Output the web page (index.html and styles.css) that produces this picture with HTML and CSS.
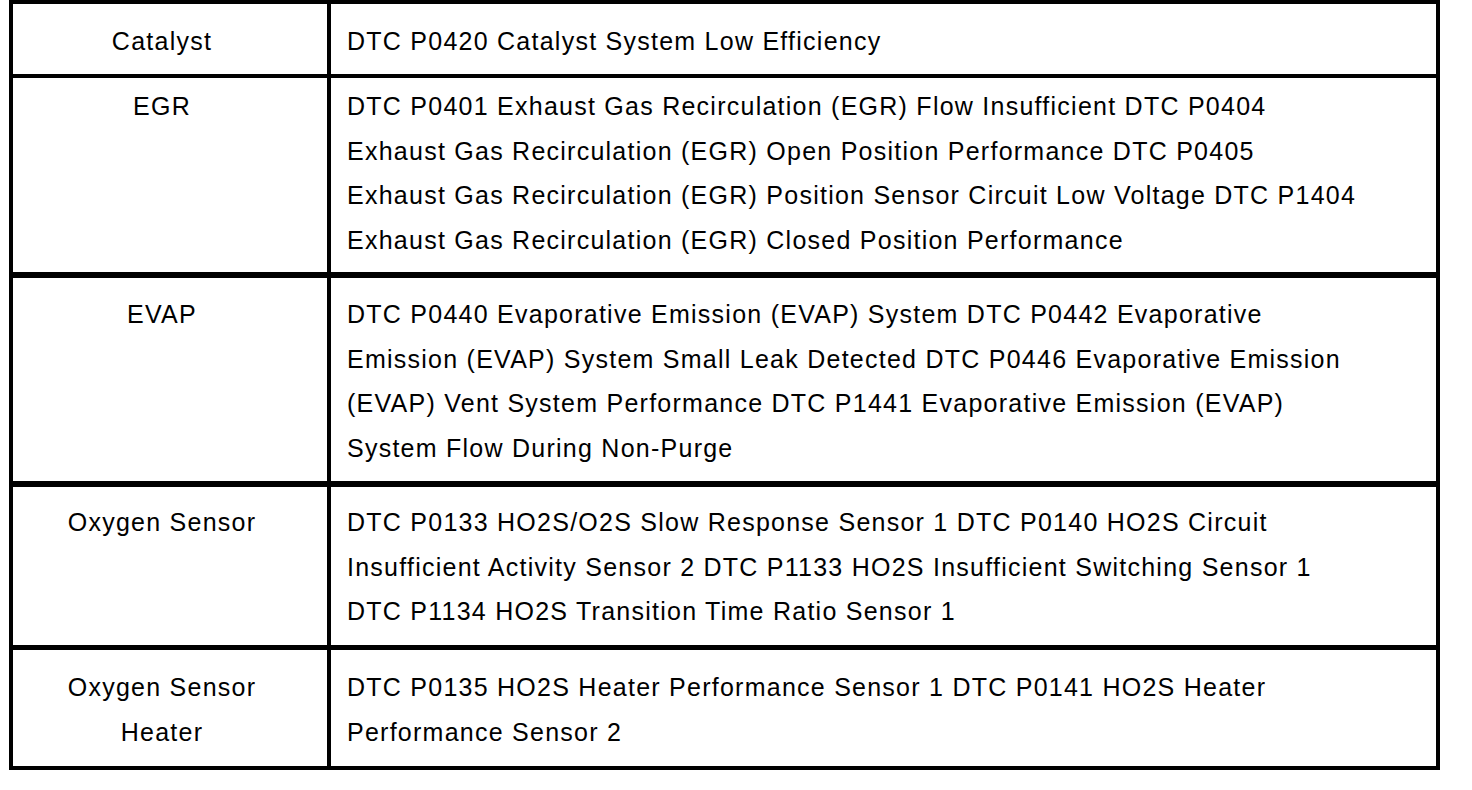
FILE: index.html
```html
<!DOCTYPE html>
<html>
<head>
<meta charset="utf-8">
<link rel="stylesheet" href="styles.css">
</head>
<body>
<div class="dtc-table">
  <div class="cell label r1">Catalyst</div>
  <div class="cell desc r1">DTC P0420 Catalyst System Low Efficiency</div>

  <div class="cell label r2">EGR</div>
  <div class="cell desc r2">DTC P0401 Exhaust Gas Recirculation (EGR) Flow Insufficient DTC P0404<br>Exhaust Gas Recirculation (EGR) Open Position Performance DTC P0405<br>Exhaust Gas Recirculation (EGR) Position Sensor Circuit Low Voltage DTC P1404<br>Exhaust Gas Recirculation (EGR) Closed Position Performance</div>

  <div class="cell label r3">EVAP</div>
  <div class="cell desc r3">DTC P0440 Evaporative Emission (EVAP) System DTC P0442 Evaporative<br>Emission (EVAP) System Small Leak Detected DTC P0446 Evaporative Emission<br>(EVAP) Vent System Performance DTC P1441 Evaporative Emission (EVAP)<br>System Flow During Non-Purge</div>

  <div class="cell label r4">Oxygen Sensor</div>
  <div class="cell desc r4">DTC P0133 HO2S/O2S Slow Response Sensor 1 DTC P0140 HO2S Circuit<br>Insufficient Activity Sensor 2 DTC P1133 HO2S Insufficient Switching Sensor 1<br>DTC P1134 HO2S Transition Time Ratio Sensor 1</div>

  <div class="cell label r5">Oxygen Sensor<br>Heater</div>
  <div class="cell desc r5">DTC P0135 HO2S Heater Performance Sensor 1 DTC P0141 HO2S Heater<br>Performance Sensor 2</div>
</div>
</body>
</html>
```
FILE: styles.css
```css
html, body {
  margin: 0;
  padding: 0;
  background: #fff;
}

body {
  padding-left: 9px;
  font-family: "Liberation Sans", Arial, sans-serif;
  font-size: 25px;
  letter-spacing: 1.25px;
  line-height: 44.7px;
  color: #000;
}

.dtc-table {
  display: grid;
  grid-template-columns: 318px 1109px;
  grid-template-rows: 74px 200px 209px 163px 120px;
  width: max-content;
  border-left: 4px solid #000;
  border-top: 4px solid #000;
}

.cell {
  box-sizing: border-box;
  border-right: 4px solid #000;
  border-bottom: 4px solid #000;
  padding-top: 14px;
  white-space: nowrap;
}

.label {
  text-align: center;
  padding-right: 16px;
}

.desc {
  padding-left: 16px;
}

.r1 { padding-top: 15px; }
.r2 { padding-top: 6px; border-bottom-width: 6px; }
.r3 { padding-top: 14px; border-bottom-width: 6px; }
.r4 { padding-top: 13px; border-bottom-width: 5px; }
.r5 { padding-top: 15px; }
```
